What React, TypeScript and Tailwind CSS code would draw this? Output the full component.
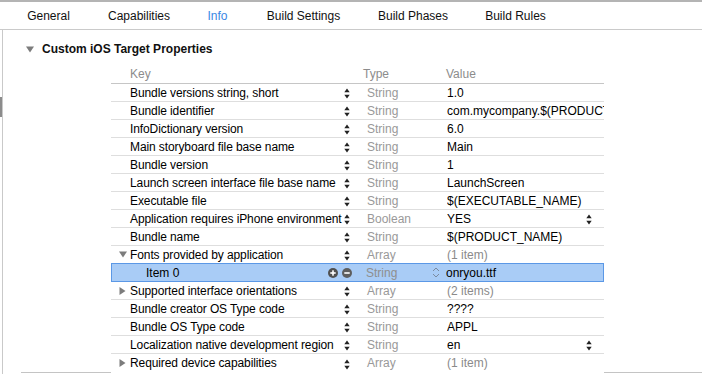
import React from "react";

type Row = {
  key: string;
  type: string;
  value: string;
  tri?: "down" | "right";
  grayValue?: boolean;
  dropdown?: boolean;
  selected?: boolean;
  indent?: boolean;
};

const rows: Row[] = [
  { key: "Bundle versions string, short", type: "String", value: "1.0" },
  { key: "Bundle identifier", type: "String", value: "com.mycompany.$(PRODUCT_NAME:rfc1034identifier)" },
  { key: "InfoDictionary version", type: "String", value: "6.0" },
  { key: "Main storyboard file base name", type: "String", value: "Main" },
  { key: "Bundle version", type: "String", value: "1" },
  { key: "Launch screen interface file base name", type: "String", value: "LaunchScreen" },
  { key: "Executable file", type: "String", value: "$(EXECUTABLE_NAME)" },
  { key: "Application requires iPhone environment", type: "Boolean", value: "YES", dropdown: true },
  { key: "Bundle name", type: "String", value: "$(PRODUCT_NAME)" },
  { key: "Fonts provided by application", type: "Array", value: "(1 item)", tri: "down", grayValue: true },
  { key: "Item 0", type: "String", value: "onryou.ttf", selected: true, indent: true },
  { key: "Supported interface orientations", type: "Array", value: "(2 items)", tri: "right", grayValue: true },
  { key: "Bundle creator OS Type code", type: "String", value: "????" },
  { key: "Bundle OS Type code", type: "String", value: "APPL" },
  { key: "Localization native development region", type: "String", value: "en", dropdown: true },
  { key: "Required device capabilities", type: "Array", value: "(1 item)", tri: "right", grayValue: true },
];

function Stepper() {
  return (
    <svg width="6" height="11" viewBox="0 0 6 11" className="block">
      <polygon points="0.3,4.2 3,0.6 5.7,4.2" fill="#222" />
      <polygon points="0.3,6.8 3,10.4 5.7,6.8" fill="#222" />
    </svg>
  );
}

function Tri({ dir }: { dir: "down" | "right" }) {
  if (dir === "down")
    return (
      <svg width="8" height="7" viewBox="0 0 8 7" className="block">
        <polygon points="0,0.5 8,0.5 4,6.5" fill="#7c7c7c" />
      </svg>
    );
  return (
    <svg width="7" height="8" viewBox="0 0 7 8" className="block">
      <polygon points="0.5,0 6.5,4 0.5,8" fill="#7c7c7c" />
    </svg>
  );
}

function PlusMinus() {
  return (
    <div className="flex items-center gap-[4px]">
      <svg width="10" height="10" viewBox="0 0 10 10" className="block">
        <circle cx="5" cy="5" r="5" fill="#505050" />
        <rect x="2.3" y="4.2" width="5.4" height="1.6" fill="#fff" />
        <rect x="4.2" y="2.3" width="1.6" height="5.4" fill="#fff" />
      </svg>
      <svg width="10" height="10" viewBox="0 0 10 10" className="block">
        <circle cx="5" cy="5" r="5" fill="#5e5e5e" />
        <rect x="2.3" y="4.2" width="5.4" height="1.6" fill="#fff" />
      </svg>
    </div>
  );
}

function UpDown() {
  return (
    <svg width="8" height="11" viewBox="0 0 8 11" className="block">
      <polyline points="1,4 4,1 7,4" fill="none" stroke="#7a8aa0" strokeWidth="1" />
      <polyline points="1,7 4,10 7,7" fill="none" stroke="#7a8aa0" strokeWidth="1" />
    </svg>
  );
}

function TableRow({ r, last }: { r: Row; last: boolean }) {
  if (r.selected) {
    return (
      <div className="flex items-center h-[19px] -mt-px border border-[#5b98e6] bg-[#a9ccf6]">
        <div className="w-[216px] shrink-0 pl-[34px] whitespace-nowrap overflow-hidden text-[#000]">{r.key}</div>
        <div className="w-[38px] shrink-0 flex">
          <PlusMinus />
        </div>
        <div className="w-[66px] shrink-0 text-[#8f8f8f] whitespace-nowrap">{r.type}</div>
        <div className="w-[14px] shrink-0 flex">
          <UpDown />
        </div>
        <div className="flex-1 whitespace-nowrap overflow-hidden text-[#000]">{r.value}</div>
      </div>
    );
  }
  return (
    <div
      className={
        "flex items-center h-[18px] " + (last ? "" : "border-b border-[#dedede]")
      }
    >
      <div className="w-[233px] shrink-0 flex items-center whitespace-nowrap overflow-hidden">
        <div className="w-[19px] shrink-0 flex justify-start pl-[8px]">{r.tri ? <Tri dir={r.tri} /> : null}</div>
        <span className="text-[#000] shrink-0 tracking-[-0.1px]">{r.key}</span>
      </div>
      <div className="w-[23px] shrink-0 flex pt-[2px]">
        <Stepper />
      </div>
      <div className="w-[80px] shrink-0 text-[#999999] whitespace-nowrap">{r.type}</div>
      <div className="flex-1 min-w-0 flex items-center overflow-hidden">
        <span className={"flex-1 min-w-0 whitespace-nowrap overflow-hidden " + (r.grayValue ? "text-[#8a8a8a]" : "text-[#000]")}>
          {r.value}
        </span>
        {r.dropdown ? (
          <div className="pr-[12px] pt-[2px]">
            <Stepper />
          </div>
        ) : null}
      </div>
    </div>
  );
}

export default function App() {
  const tabs = [
    { label: "General", w: "w-[79px]" },
    { label: "Capabilities", w: "w-[102px]" },
    { label: "Info", w: "w-[55px]", active: true },
    { label: "Build Settings", w: "w-[117px]" },
    { label: "Build Phases", w: "w-[102px]" },
    { label: "Build Rules", w: "w-[103px]" },
  ];
  return (
    <div className="w-[702px] h-[374px] overflow-hidden bg-white text-[12px] leading-[14px] font-['Liberation_Sans',Arial,sans-serif] text-black">
      {/* Tab bar */}
      <div className="h-[30px] border-t-2 border-t-[#b4b4b4] border-b border-b-[#cacaca] flex items-center pl-[9px]">
        {tabs.map((t) => (
          <div
            key={t.label}
            className={t.w + " text-center whitespace-nowrap " + (t.active ? "text-[#3a87e4]" : "text-[#111]")}
          >
            {t.label}
          </div>
        ))}
      </div>
      {/* Body */}
      <div className="flex h-[344px]">
        <div className="w-[3px] border-r border-[#c9c9c9] flex flex-col">
          <div className="h-[67px]" />
          <div className="h-[20px] w-[2px] bg-[#8c8c8c]" />
        </div>
        <div className="flex-1 flex flex-col">
          <div className="h-[10px]" />
          <div className="h-[18px] flex items-center pl-[23px]">
            <Tri dir="down" />
            <span className="ml-[8px] font-bold text-[#111]">Custom iOS Target Properties</span>
          </div>
          <div className="h-[7px]" />
          <div className="ml-[108px] w-[493px] flex flex-col">
            <div className="h-[19px] border-b border-[#c6c6c6] flex items-center text-[#8c8c8c]">
              <div className="w-[252px] pl-[19px]">Key</div>
              <div className="w-[83px]">Type</div>
              <div>Value</div>
            </div>
            {rows.map((r, i) => (
              <TableRow key={i} r={r} last={i === rows.length - 1} />
            ))}
          </div>
          <div className="flex h-px">
            <div className="ml-[18px] w-[90px] bg-[#c4c4c4]" />
            <div className="w-[493px]" />
            <div className="flex-1 bg-[#c4c4c4]" />
          </div>
        </div>
      </div>
    </div>
  );
}
